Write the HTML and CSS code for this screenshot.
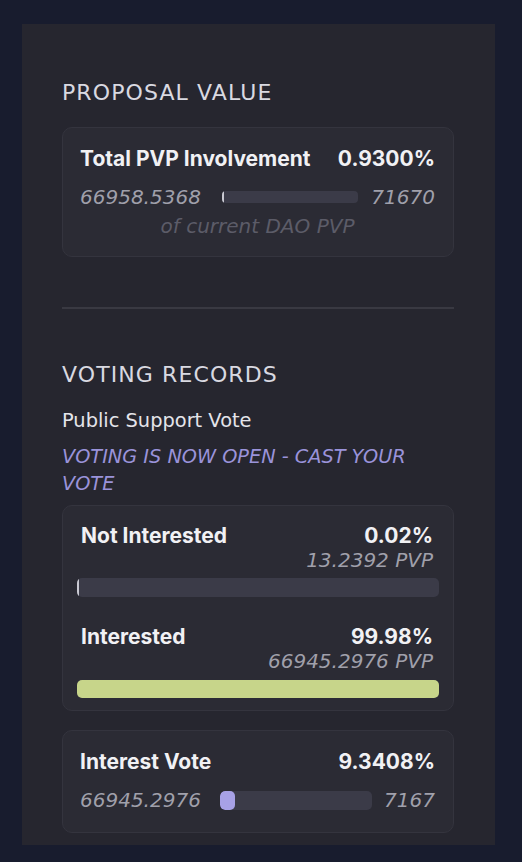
FILE: index.html
```html
<!DOCTYPE html>
<html lang="en">
<head>
<meta charset="utf-8">
<title>Proposal</title>
<link rel="stylesheet" href="styles.css">
</head>
<body>
<div class="panel">
  <h2 class="section-title">PROPOSAL VALUE</h2>
  <div class="card card-value">
    <div class="row-head">
      <span class="label">Total PVP Involvement</span>
      <span class="pct">0.9300%</span>
    </div>
    <div class="row-range">
      <span class="num">66958.5368</span>
      <div class="bar bar-small"><div class="fill fill-tick" style="width:1%"></div></div>
      <span class="num">71670</span>
    </div>
    <div class="caption">of current DAO PVP</div>
  </div>

  <div class="divider"></div>

  <h2 class="section-title section-voting">VOTING RECORDS</h2>
  <div class="subtitle">Public Support Vote</div>
  <div class="notice">VOTING IS NOW OPEN - CAST YOUR VOTE</div>

  <div class="card card-votes">
    <div class="vote">
      <div class="row-head">
        <span class="label">Not Interested</span>
        <span class="pct">0.02%</span>
      </div>
      <div class="amount">13.2392 PVP</div>
    </div>
    <div class="bar bar-wide"><div class="fill fill-tick" style="width:0.3%"></div></div>
    <div class="vote vote-second">
      <div class="row-head">
        <span class="label">Interested</span>
        <span class="pct">99.98%</span>
      </div>
      <div class="amount">66945.2976 PVP</div>
    </div>
    <div class="bar bar-wide bar-green"><div class="fill fill-green" style="width:100%"></div></div>
  </div>

  <div class="card card-interest">
    <div class="row-head">
      <span class="label">Interest Vote</span>
      <span class="pct">9.3408%</span>
    </div>
    <div class="row-range">
      <span class="num">66945.2976</span>
      <div class="bar bar-mid"><div class="fill fill-purple" style="width:9.3%"></div></div>
      <span class="num">7167</span>
    </div>
  </div>
</div>
</body>
</html>
```

FILE: styles.css
```css
* { box-sizing: border-box; }

html, body {
  margin: 0;
  padding: 0;
  background: #181c2e;
}

body {
  width: 522px;
  height: 862px;
  overflow: hidden;
  padding-top: 24px;
  padding-left: 22px;
}

.panel {
  width: 473px;
  height: 821px;
  background: #26262f;
  padding: 56px 41px 0 40px;
  display: flex;
  flex-direction: column;
}

.section-title {
  margin: 0;
  font-family: "DejaVu Sans", sans-serif;
  font-weight: normal;
  font-size: 22px;
  line-height: 26px;
  letter-spacing: 1.1px;
  color: #d9d9e1;
}

.card {
  background: #2b2b34;
  border: 1px solid #34343e;
  border-radius: 10px;
}

.card-value {
  margin-top: 21px;
  padding: 19px 18px 18px 17px;
}

.row-head {
  display: flex;
  justify-content: space-between;
  align-items: baseline;
  font-family: Inter, "Liberation Sans", sans-serif;
  font-weight: 700;
  font-size: 21px;
  line-height: 24px;
  color: #f1f1f4;
}

.row-range {
  display: flex;
  justify-content: space-between;
  align-items: center;
  height: 24px;
  margin-top: 14px;
}

.row-range .bar { margin-left: 8px; }

.num, .amount, .caption {
  font-family: "DejaVu Sans", sans-serif;
  font-style: italic;
  font-size: 20px;
  color: #a0a0ab;
}

.num { line-height: 24px; }

.caption {
  margin-top: 5px;
  line-height: 24px;
  text-align: center;
  color: #5c5c68;
}

.bar {
  background: #3b3b48;
  border-radius: 5px;
  overflow: hidden;
  display: flex;
}

.bar-small { width: 136px; height: 12px; border-radius: 4px; }
.bar-mid { width: 152px; height: 19px; }
.bar-wide { width: 100%; height: 19px; }

.fill { height: 100%; }
.fill-tick { background: #c9c9d2; min-width: 2px; }
.fill-green { background: #c7d58a; }
.fill-purple { background: #a7a1e6; border-radius: 5px; min-width: 14px; }

.divider {
  margin-top: 50px;
  height: 2px;
  background: #393942;
}

.section-voting { margin-top: 53px; }

.subtitle {
  margin-top: 21px;
  font-family: "DejaVu Sans", sans-serif;
  font-size: 19.4px;
  line-height: 24px;
  color: #e4e4ea;
}

.notice {
  margin-top: 10px;
  font-family: "DejaVu Sans", sans-serif;
  font-style: italic;
  font-size: 19.3px;
  line-height: 27px;
  color: #9a93da;
}

.card-votes {
  margin-top: 8px;
  padding: 18px 14px 12px 14px;
}

.vote { padding: 0 6px 0 4px; }
.vote-second { margin-top: 28px; }

.amount {
  margin-top: 1px;
  line-height: 22px;
  text-align: right;
}

.card-votes .bar-wide { margin-top: 7px; }
.card-votes .bar-green { margin-top: 8px; height: 18px; }

.card-interest {
  margin-top: 19px;
  padding: 19px 18px 20px 17px;
}
```
